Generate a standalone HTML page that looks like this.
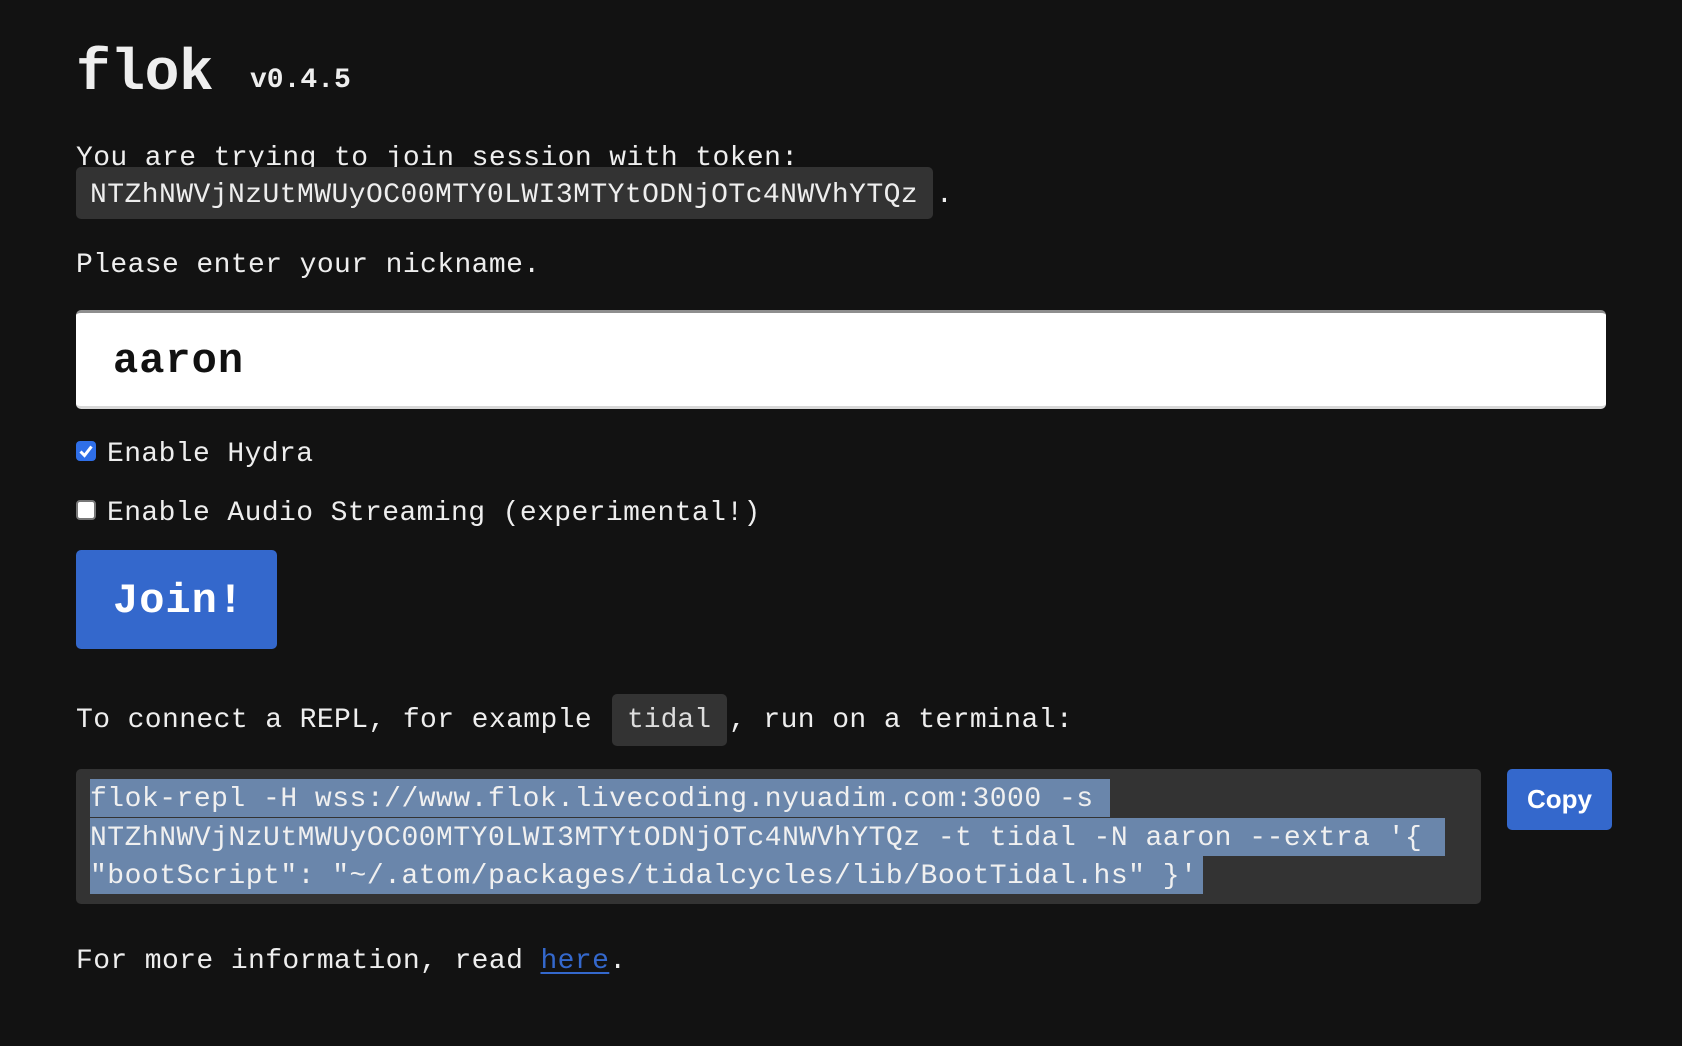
<!DOCTYPE html>
<html><head><meta charset="utf-8"><style>
html,body{margin:0;padding:0;background:#121212;width:1682px;height:1046px;overflow:hidden}
body{font-family:"Liberation Mono",monospace;color:#eeeeee;position:relative}
.a{position:absolute;white-space:pre;line-height:28px;font-size:28px;letter-spacing:0.4px}
.box{position:absolute;background:#333;border-radius:5px}
.hl{position:absolute;left:90px;height:38px;background:#6a86ab}
.cl{position:absolute;left:90px;white-space:pre;font-size:28px;line-height:28px;letter-spacing:0.5px;color:#f0f0f0}
.cb{position:absolute;left:76px;width:20px;height:20px;border-radius:4px;box-sizing:border-box}
</style></head><body>
<div class="a" style="left:76px;top:46px;font-size:58px;line-height:58px;font-weight:bold;letter-spacing:-0.5px">flok</div>
<div class="a" style="left:250px;top:67px;font-weight:bold;letter-spacing:0">v0.4.5</div>
<div class="a" style="left:76px;top:145px">You are trying to join session with token:</div>
<div class="box" style="left:76px;top:167px;width:857px;height:52px"></div>
<div class="a" style="left:90px;top:182px;letter-spacing:0.45px">NTZhNWVjNzUtMWUyOC00MTY0LWI3MTYtODNjOTc4NWVhYTQz</div>
<div class="a" style="left:936px;top:182px">.</div>
<div class="a" style="left:76px;top:252px">Please enter your nickname.</div>
<div style="position:absolute;left:76px;top:310px;width:1530px;height:99px;background:#fff;border-radius:5px;border-top:3px solid #8e8e8e;border-bottom:3px solid #d8d8d8;box-sizing:border-box"></div>
<div class="a" style="left:113px;top:340px;font-size:42px;line-height:42px;color:#111;font-weight:bold;letter-spacing:1px">aaron</div>
<div class="cb" style="top:441px;background:#2f6fe8"><svg width="20" height="20" viewBox="0 0 20 20" style="position:absolute;left:0;top:0"><path d="M4.5 10.5 L8.5 14.5 L15.5 5.5" stroke="#fff" stroke-width="3" fill="none"/></svg></div>
<div class="a" style="left:107px;top:441px">Enable Hydra</div>
<div class="cb" style="top:500px;background:#fff;border:2px solid #777"></div>
<div class="a" style="left:107px;top:500px">Enable Audio Streaming (experimental!)</div>
<div style="position:absolute;left:76px;top:550px;width:201px;height:99px;background:#3468cc;border-radius:5px"></div>
<div class="a" style="left:113px;top:580px;font-size:42px;line-height:42px;font-weight:bold;color:#fff;letter-spacing:1px">Join!</div>
<div class="a" style="left:76px;top:707px">To connect a REPL, for example</div>
<div class="box" style="left:612px;top:694px;width:115px;height:52px"></div>
<div class="a" style="left:627px;top:707px;color:#ddd;letter-spacing:0">tidal</div>
<div class="a" style="left:729px;top:707px">, run on a terminal:</div>
<div class="box" style="left:76px;top:769px;width:1405px;height:135px"></div>
<div class="hl" style="top:779px;width:1020px"></div>
<div class="hl" style="top:818px;width:1355px"></div>
<div class="hl" style="top:856px;width:1113px"></div>
<div class="cl" style="top:786px">flok-repl -H wss://www.flok.livecoding.nyuadim.com:3000 -s</div>
<div class="cl" style="top:825px">NTZhNWVjNzUtMWUyOC00MTY0LWI3MTYtODNjOTc4NWVhYTQz -t tidal -N aaron --extra '{</div>
<div class="cl" style="top:863px">"bootScript": "~/.atom/packages/tidalcycles/lib/BootTidal.hs" }'</div>
<div style="position:absolute;left:1507px;top:769px;width:105px;height:61px;background:#3468cc;border-radius:5px;color:#fff;font-family:'Liberation Sans',sans-serif;font-weight:bold;font-size:26px;line-height:61px;text-align:center">Copy</div>
<div class="a" style="left:76px;top:948px">For more information, read <span style="color:#3468cc;text-decoration:underline;text-underline-offset:4px">here</span>.</div>
</body></html>
